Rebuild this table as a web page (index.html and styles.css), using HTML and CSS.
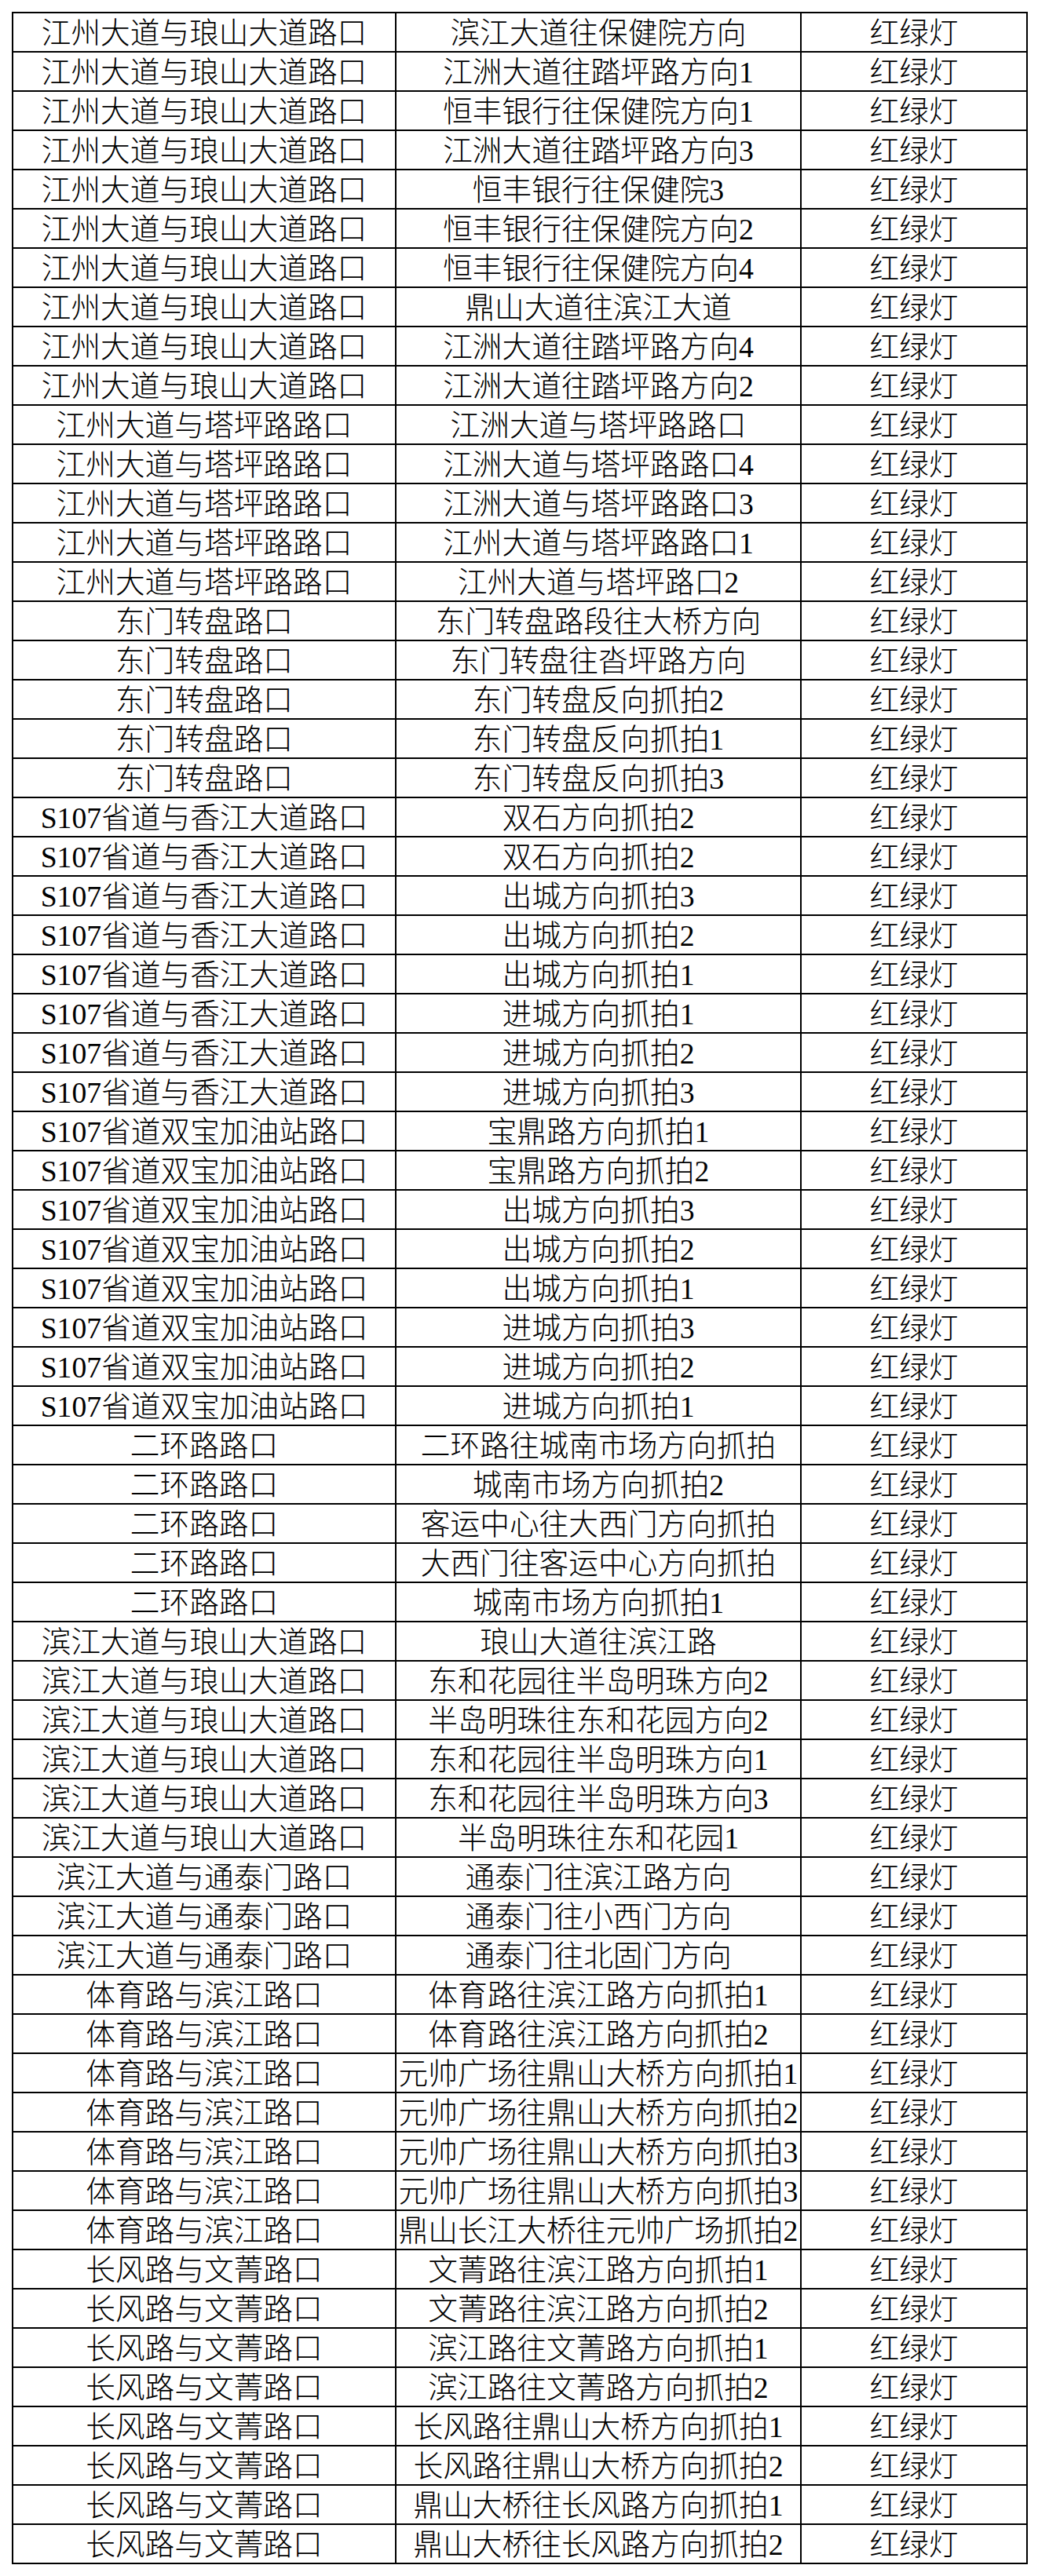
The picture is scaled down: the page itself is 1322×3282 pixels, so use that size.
FILE: index.html
```html
<!DOCTYPE html>
<html lang="zh-CN">
<head>
<meta charset="utf-8">
<title>红绿灯点位表</title>
<link rel="stylesheet" href="styles.css">
</head>
<body>
<table class="sheet">
<colgroup><col class="c1"><col class="c2"><col class="c3"></colgroup>
<tbody>
<tr><td>江州大道与琅山大道路口</td><td>滨江大道往保健院方向</td><td>红绿灯</td></tr>
<tr><td>江州大道与琅山大道路口</td><td>江洲大道往踏坪路方向1</td><td>红绿灯</td></tr>
<tr><td>江州大道与琅山大道路口</td><td>恒丰银行往保健院方向1</td><td>红绿灯</td></tr>
<tr><td>江州大道与琅山大道路口</td><td>江洲大道往踏坪路方向3</td><td>红绿灯</td></tr>
<tr><td>江州大道与琅山大道路口</td><td>恒丰银行往保健院3</td><td>红绿灯</td></tr>
<tr><td>江州大道与琅山大道路口</td><td>恒丰银行往保健院方向2</td><td>红绿灯</td></tr>
<tr><td>江州大道与琅山大道路口</td><td>恒丰银行往保健院方向4</td><td>红绿灯</td></tr>
<tr><td>江州大道与琅山大道路口</td><td>鼎山大道往滨江大道</td><td>红绿灯</td></tr>
<tr><td>江州大道与琅山大道路口</td><td>江洲大道往踏坪路方向4</td><td>红绿灯</td></tr>
<tr><td>江州大道与琅山大道路口</td><td>江洲大道往踏坪路方向2</td><td>红绿灯</td></tr>
<tr><td>江州大道与塔坪路路口</td><td>江洲大道与塔坪路路口</td><td>红绿灯</td></tr>
<tr><td>江州大道与塔坪路路口</td><td>江洲大道与塔坪路路口4</td><td>红绿灯</td></tr>
<tr><td>江州大道与塔坪路路口</td><td>江洲大道与塔坪路路口3</td><td>红绿灯</td></tr>
<tr><td>江州大道与塔坪路路口</td><td>江州大道与塔坪路路口1</td><td>红绿灯</td></tr>
<tr><td>江州大道与塔坪路路口</td><td>江州大道与塔坪路口2</td><td>红绿灯</td></tr>
<tr><td>东门转盘路口</td><td>东门转盘路段往大桥方向</td><td>红绿灯</td></tr>
<tr><td>东门转盘路口</td><td>东门转盘往沓坪路方向</td><td>红绿灯</td></tr>
<tr><td>东门转盘路口</td><td>东门转盘反向抓拍2</td><td>红绿灯</td></tr>
<tr><td>东门转盘路口</td><td>东门转盘反向抓拍1</td><td>红绿灯</td></tr>
<tr><td>东门转盘路口</td><td>东门转盘反向抓拍3</td><td>红绿灯</td></tr>
<tr><td>S107省道与香江大道路口</td><td>双石方向抓拍2</td><td>红绿灯</td></tr>
<tr><td>S107省道与香江大道路口</td><td>双石方向抓拍2</td><td>红绿灯</td></tr>
<tr><td>S107省道与香江大道路口</td><td>出城方向抓拍3</td><td>红绿灯</td></tr>
<tr><td>S107省道与香江大道路口</td><td>出城方向抓拍2</td><td>红绿灯</td></tr>
<tr><td>S107省道与香江大道路口</td><td>出城方向抓拍1</td><td>红绿灯</td></tr>
<tr><td>S107省道与香江大道路口</td><td>进城方向抓拍1</td><td>红绿灯</td></tr>
<tr><td>S107省道与香江大道路口</td><td>进城方向抓拍2</td><td>红绿灯</td></tr>
<tr><td>S107省道与香江大道路口</td><td>进城方向抓拍3</td><td>红绿灯</td></tr>
<tr><td>S107省道双宝加油站路口</td><td>宝鼎路方向抓拍1</td><td>红绿灯</td></tr>
<tr><td>S107省道双宝加油站路口</td><td>宝鼎路方向抓拍2</td><td>红绿灯</td></tr>
<tr><td>S107省道双宝加油站路口</td><td>出城方向抓拍3</td><td>红绿灯</td></tr>
<tr><td>S107省道双宝加油站路口</td><td>出城方向抓拍2</td><td>红绿灯</td></tr>
<tr><td>S107省道双宝加油站路口</td><td>出城方向抓拍1</td><td>红绿灯</td></tr>
<tr><td>S107省道双宝加油站路口</td><td>进城方向抓拍3</td><td>红绿灯</td></tr>
<tr><td>S107省道双宝加油站路口</td><td>进城方向抓拍2</td><td>红绿灯</td></tr>
<tr><td>S107省道双宝加油站路口</td><td>进城方向抓拍1</td><td>红绿灯</td></tr>
<tr><td>二环路路口</td><td>二环路往城南市场方向抓拍</td><td>红绿灯</td></tr>
<tr><td>二环路路口</td><td>城南市场方向抓拍2</td><td>红绿灯</td></tr>
<tr><td>二环路路口</td><td>客运中心往大西门方向抓拍</td><td>红绿灯</td></tr>
<tr><td>二环路路口</td><td>大西门往客运中心方向抓拍</td><td>红绿灯</td></tr>
<tr><td>二环路路口</td><td>城南市场方向抓拍1</td><td>红绿灯</td></tr>
<tr><td>滨江大道与琅山大道路口</td><td>琅山大道往滨江路</td><td>红绿灯</td></tr>
<tr><td>滨江大道与琅山大道路口</td><td>东和花园往半岛明珠方向2</td><td>红绿灯</td></tr>
<tr><td>滨江大道与琅山大道路口</td><td>半岛明珠往东和花园方向2</td><td>红绿灯</td></tr>
<tr><td>滨江大道与琅山大道路口</td><td>东和花园往半岛明珠方向1</td><td>红绿灯</td></tr>
<tr><td>滨江大道与琅山大道路口</td><td>东和花园往半岛明珠方向3</td><td>红绿灯</td></tr>
<tr><td>滨江大道与琅山大道路口</td><td>半岛明珠往东和花园1</td><td>红绿灯</td></tr>
<tr><td>滨江大道与通泰门路口</td><td>通泰门往滨江路方向</td><td>红绿灯</td></tr>
<tr><td>滨江大道与通泰门路口</td><td>通泰门往小西门方向</td><td>红绿灯</td></tr>
<tr><td>滨江大道与通泰门路口</td><td>通泰门往北固门方向</td><td>红绿灯</td></tr>
<tr><td>体育路与滨江路口</td><td>体育路往滨江路方向抓拍1</td><td>红绿灯</td></tr>
<tr><td>体育路与滨江路口</td><td>体育路往滨江路方向抓拍2</td><td>红绿灯</td></tr>
<tr><td>体育路与滨江路口</td><td>元帅广场往鼎山大桥方向抓拍1</td><td>红绿灯</td></tr>
<tr><td>体育路与滨江路口</td><td>元帅广场往鼎山大桥方向抓拍2</td><td>红绿灯</td></tr>
<tr><td>体育路与滨江路口</td><td>元帅广场往鼎山大桥方向抓拍3</td><td>红绿灯</td></tr>
<tr><td>体育路与滨江路口</td><td>元帅广场往鼎山大桥方向抓拍3</td><td>红绿灯</td></tr>
<tr><td>体育路与滨江路口</td><td>鼎山长江大桥往元帅广场抓拍2</td><td>红绿灯</td></tr>
<tr><td>长风路与文菁路口</td><td>文菁路往滨江路方向抓拍1</td><td>红绿灯</td></tr>
<tr><td>长风路与文菁路口</td><td>文菁路往滨江路方向抓拍2</td><td>红绿灯</td></tr>
<tr><td>长风路与文菁路口</td><td>滨江路往文菁路方向抓拍1</td><td>红绿灯</td></tr>
<tr><td>长风路与文菁路口</td><td>滨江路往文菁路方向抓拍2</td><td>红绿灯</td></tr>
<tr><td>长风路与文菁路口</td><td>长风路往鼎山大桥方向抓拍1</td><td>红绿灯</td></tr>
<tr><td>长风路与文菁路口</td><td>长风路往鼎山大桥方向抓拍2</td><td>红绿灯</td></tr>
<tr><td>长风路与文菁路口</td><td>鼎山大桥往长风路方向抓拍1</td><td>红绿灯</td></tr>
<tr><td>长风路与文菁路口</td><td>鼎山大桥往长风路方向抓拍2</td><td>红绿灯</td></tr>
</tbody>
</table>
</body>
</html>
```

FILE: styles.css
```css
html, body {
  margin: 0;
  padding: 0;
  background: #ffffff;
}

body {
  padding: 15px 0 0 15px;
  font-family: "Liberation Serif", "Noto Sans CJK SC", serif;
  color: #000000;
}

.sheet {
  border-collapse: collapse;
  table-layout: fixed;
  width: 1292px;
}

.c1 { width: 488px; }
.c2 { width: 516px; }
.c3 { width: 288px; }

.sheet td {
  border: 2px solid #000000;
  padding: 2px 0 0 0;
  height: 46px;
  line-height: 46px;
  font-size: 37.7px;
  font-weight: 300;
  text-align: center;
  vertical-align: middle;
  white-space: nowrap;
  overflow: hidden;
}
```
